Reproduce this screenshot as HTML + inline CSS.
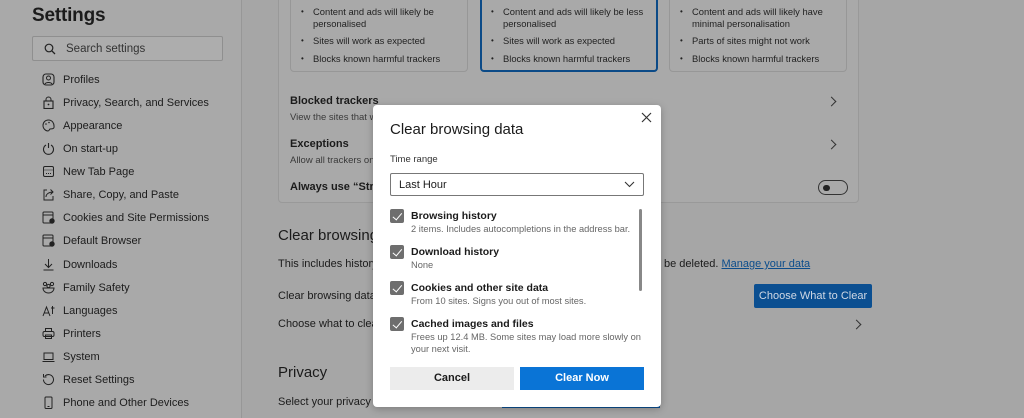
<!DOCTYPE html>
<html><head><meta charset="utf-8"><style>
*{box-sizing:border-box;margin:0;padding:0}
body{width:1024px;height:418px;overflow:hidden;background:#a6a6a6;font-family:"Liberation Sans",Arial,sans-serif;color:#1b1b1b;position:relative}
.side{position:absolute;left:0;top:0;width:242px;height:418px;background:#a9a9a9;border-right:1px solid #979797}
.side h1{position:absolute;left:32px;top:5px;font-size:19px;font-weight:bold;letter-spacing:-0.2px}
.search{position:absolute;left:32px;top:36px;width:191px;height:25px;border:1px solid #8f8f8f;border-radius:2px;background:#adadad;font-size:11.5px;color:#333;padding:6px 0 0 33px}
.search svg{position:absolute;left:11px;top:6px}
.item{position:absolute;left:63px;font-size:11px;color:#1c1c1c}
.ic{position:absolute;left:42px;width:13px;height:13px}
.card{position:absolute;left:278px;top:-10px;width:581px;height:213px;border:1px solid #999;border-radius:4px;background:#a9a9a9}
.sub{position:absolute;top:-10px;width:178px;height:91px;border:1px solid #979797;border-radius:4px}
.sub ul{list-style:none;padding:15px 0 0 10px;font-size:9.4px;color:#222}
.sub li{position:relative;padding-left:12px;margin-bottom:6px;line-height:11.5px}
.sub li:before{content:"•";position:absolute;left:0;font-size:8px}
.t{position:absolute;font-size:11px}
.b{font-weight:bold}
.g{color:#3a3a3a;font-size:9.5px}
.chev{position:absolute;width:7px;height:7px;border-right:1.3px solid #333;border-top:1.3px solid #333;transform:rotate(45deg)}
.dlg{position:absolute;left:373px;top:105px;width:288px;height:302px;background:#fff;border-radius:4px;box-shadow:0 2px 8px rgba(0,0,0,.25)}
.cb{position:absolute;left:17px;width:14px;height:14px;background:#6e6e6e;border-radius:2px}
.cb:after{content:"";position:absolute;left:4.5px;top:1.5px;width:4px;height:7.5px;border-right:1.6px solid #fff;border-bottom:1.6px solid #fff;transform:rotate(40deg)}
.dt{position:absolute;left:38px;font-size:10.5px;font-weight:bold;color:#1b1b1b}
.dd{position:absolute;left:38px;font-size:9.3px;color:#666;line-height:11.5px}
</style></head><body>
<div class="side">
<h1>Settings</h1>
<div class="search"><svg width="12" height="12" viewBox="0 0 12 12"><circle cx="5" cy="5" r="3.8" fill="none" stroke="#222" stroke-width="1.2"/><path d="M7.8 7.8L11 11" stroke="#222" stroke-width="1.3"/></svg>Search settings</div>
<svg class="ic" style="top:73px" viewBox="0 0 13 13"><rect x="1" y="1" width="11" height="11" rx="3" fill="none" stroke="#222" stroke-width="1.1"/><circle cx="6.5" cy="5" r="2" fill="none" stroke="#222"/><path d="M3 11c1-2 6-2 7 0" fill="none" stroke="#222"/></svg>
<div class="item" style="top:74px">Profiles</div>
<svg class="ic" style="top:96px" viewBox="0 0 13 13"><rect x="2" y="5" width="9" height="7.5" fill="none" stroke="#222" stroke-width="1.1"/><path d="M4 5V3.5a2.5 2.5 0 015 0V5" fill="none" stroke="#222"/><circle cx="6.5" cy="8.5" r=".9" fill="#222"/></svg>
<div class="item" style="top:97px">Privacy, Search, and Services</div>
<svg class="ic" style="top:119px" viewBox="0 0 13 13"><path d="M6.5 1C3 1 1 3.5 1 6.5S3.5 12 6 12c1.5 0 1-1.5 2-2s3.5.5 4-1.5C12.5 4 10 1 6.5 1z" fill="none" stroke="#222"/><circle cx="4" cy="5" r=".8" fill="#222"/><circle cx="7" cy="3.5" r=".8" fill="#222"/></svg>
<div class="item" style="top:120px">Appearance</div>
<svg class="ic" style="top:142px" viewBox="0 0 13 13"><path d="M4 3a5 5 0 105 0" fill="none" stroke="#222" stroke-width="1.1"/><path d="M6.5 1v5" stroke="#222" stroke-width="1.1"/></svg>
<div class="item" style="top:143px">On start-up</div>
<svg class="ic" style="top:165px" viewBox="0 0 13 13"><rect x="1.5" y="1.5" width="10" height="10" rx="1.5" fill="none" stroke="#222"/><path d="M1.5 5h10M4 8.5h5" stroke="#222" stroke-dasharray="1 1"/></svg>
<div class="item" style="top:166px">New Tab Page</div>
<svg class="ic" style="top:188px" viewBox="0 0 13 13"><path d="M5 2H2v10h9V8" fill="none" stroke="#222"/><path d="M4 9c0-3 3-5 7-5M8.5 1.5L11 4 8.5 6.5" fill="none" stroke="#222"/></svg>
<div class="item" style="top:189px">Share, Copy, and Paste</div>
<svg class="ic" style="top:211px" viewBox="0 0 13 13"><rect x="1" y="1" width="10" height="11" rx="1" fill="none" stroke="#222"/><path d="M1 4h10" stroke="#222"/><circle cx="10" cy="10" r="2.7" fill="#222"/></svg>
<div class="item" style="top:212px">Cookies and Site Permissions</div>
<svg class="ic" style="top:234px" viewBox="0 0 13 13"><rect x="1" y="1" width="10" height="11" rx="1" fill="none" stroke="#222"/><path d="M1 4h10" stroke="#222"/><circle cx="10" cy="10" r="2.7" fill="#222"/></svg>
<div class="item" style="top:235px">Default Browser</div>
<svg class="ic" style="top:258px" viewBox="0 0 13 13"><path d="M6.5 1v8M3 6l3.5 3.5L10 6M1.5 12h10" fill="none" stroke="#222"/></svg>
<div class="item" style="top:259px">Downloads</div>
<svg class="ic" style="top:281px" viewBox="0 0 13 13"><circle cx="3" cy="3" r="1.6" fill="none" stroke="#222"/><circle cx="10" cy="3" r="1.6" fill="none" stroke="#222"/><circle cx="6.5" cy="5" r="1.6" fill="none" stroke="#222"/><path d="M1 7h11c0 3-2.5 5-5.5 5S1 10 1 7z" fill="none" stroke="#222"/></svg>
<div class="item" style="top:282px">Family Safety</div>
<svg class="ic" style="top:304px" viewBox="0 0 13 13"><path d="M1 12L4.5 3 8 12M2.5 9h4M9 4h3.5M10.5 2v8" fill="none" stroke="#222"/></svg>
<div class="item" style="top:305px">Languages</div>
<svg class="ic" style="top:327px" viewBox="0 0 13 13"><rect x="1" y="4.5" width="11" height="5" rx="1.5" fill="none" stroke="#222"/><rect x="3.5" y="1.5" width="6" height="3" fill="none" stroke="#222"/><rect x="3.5" y="8" width="6" height="3.5" fill="none" stroke="#222"/></svg>
<div class="item" style="top:328px">Printers</div>
<svg class="ic" style="top:350px" viewBox="0 0 13 13"><rect x="2" y="3" width="9" height="6.5" fill="none" stroke="#222"/><path d="M.5 11.5h12" stroke="#222"/></svg>
<div class="item" style="top:351px">System</div>
<svg class="ic" style="top:373px" viewBox="0 0 13 13"><path d="M3 3a5 5 0 11-1.5 3.5M1.5 1v3h3" fill="none" stroke="#222"/></svg>
<div class="item" style="top:374px">Reset Settings</div>
<svg class="ic" style="top:396px" viewBox="0 0 13 13"><rect x="3" y="1" width="7" height="11.5" rx="1" fill="none" stroke="#222"/><path d="M5.5 10.5h2" stroke="#222"/></svg>
<div class="item" style="top:397px">Phone and Other Devices</div>
</div>

<div class="card">
<div class="sub" style="left:11px"><ul style="padding-top:24px"><li>Content and ads will likely be personalised</li><li>Sites will work as expected</li><li>Blocks known harmful trackers</li></ul></div>
<div class="sub" style="left:201px;border:2px solid #0b4a87"><ul style="padding-top:23px;padding-left:9px"><li>Content and ads will likely be less personalised</li><li>Sites will work as expected</li><li>Blocks known harmful trackers</li></ul></div>
<div class="sub" style="left:390px"><ul style="padding-top:24px"><li>Content and ads will likely have minimal personalisation</li><li>Parts of sites might not work</li><li>Blocks known harmful trackers</li></ul></div>
<div class="t b" style="left:11px;top:104px">Blocked trackers</div>
<div class="t g" style="left:11px;top:121px">View the sites that w</div>
<div class="chev" style="left:549px;top:107px"></div>
<div class="t b" style="left:11px;top:147px">Exceptions</div>
<div class="t g" style="left:11px;top:164px">Allow all trackers on</div>
<div class="chev" style="left:549px;top:150px"></div>
<div class="t b" style="left:11px;top:190px">Always use “Stric</div>
<div style="position:absolute;left:539px;top:189px;width:30px;height:15px;border:1.2px solid #333;border-radius:8px"><div style="position:absolute;left:4px;top:3.5px;width:6.5px;height:6.5px;border-radius:50%;background:#222"></div></div>
</div>

<div class="t" style="left:278px;top:227px;font-size:15px">Clear browsing</div>
<div class="t" style="left:278px;top:258px">This includes history</div>
<div class="t" style="left:664px;top:258px">be deleted. <span style="color:#0c4d8c;text-decoration:underline">Manage your data</span></div>
<div class="t" style="left:278px;top:290px">Clear browsing data</div>
<div style="position:absolute;left:754px;top:284px;width:118px;height:24px;background:#0b4f91;border-radius:2px;color:#cfd8e4;font-size:11px;text-align:center;padding-top:6px">Choose What to Clear</div>
<div class="t" style="left:278px;top:318px">Choose what to clea</div>
<div class="chev" style="left:853px;top:321px"></div>
<div class="t" style="left:278px;top:364px;font-size:15px">Privacy</div>
<div class="t" style="left:278px;top:396px">Select your privacy s</div>
<div style="position:absolute;left:502px;top:405px;width:158px;height:3px;background:#0b4f91"></div>

<div class="dlg">
<div style="position:absolute;left:17px;top:16px;font-size:15px;color:#1b1b1b">Clear browsing data</div>
<svg style="position:absolute;left:268px;top:7px" width="11" height="11" viewBox="0 0 11 11"><path d="M1 1l9 9M10 1l-9 9" stroke="#333" stroke-width="1.2"/></svg>
<div style="position:absolute;left:17px;top:49px;font-size:9.5px;color:#333">Time range</div>
<div style="position:absolute;left:17px;top:68px;width:254px;height:23px;border:1px solid #777;border-radius:2px;font-size:11px;padding:5px 0 0 8px">Last Hour
<svg style="position:absolute;right:8px;top:7px" width="11" height="7" viewBox="0 0 11 7"><path d="M1 1l4.5 4.5L10 1" fill="none" stroke="#333" stroke-width="1.1"/></svg></div>
<div style="position:absolute;left:266px;top:104px;width:3px;height:82px;background:#888;border-radius:2px"></div>
<div class="cb" style="top:104px"></div><div class="dt" style="top:105px">Browsing history</div><div class="dd" style="top:119px">2 items. Includes autocompletions in the address bar.</div>
<div class="cb" style="top:140px"></div><div class="dt" style="top:141px">Download history</div><div class="dd" style="top:155px">None</div>
<div class="cb" style="top:176px"></div><div class="dt" style="top:177px">Cookies and other site data</div><div class="dd" style="top:191px">From 10 sites. Signs you out of most sites.</div>
<div class="cb" style="top:212px"></div><div class="dt" style="top:213px">Cached images and files</div><div class="dd" style="top:227px;width:232px">Frees up 12.4 MB. Some sites may load more slowly on your next visit.</div>
<div style="position:absolute;left:17px;top:262px;width:124px;height:23px;background:#ececec;font-size:11px;font-weight:bold;text-align:center;padding-top:5px">Cancel</div>
<div style="position:absolute;left:147px;top:262px;width:124px;height:23px;background:#0a74d6;color:#fff;font-size:11px;font-weight:bold;text-align:center;padding-top:5px">Clear Now</div>
</div>
</body></html>
